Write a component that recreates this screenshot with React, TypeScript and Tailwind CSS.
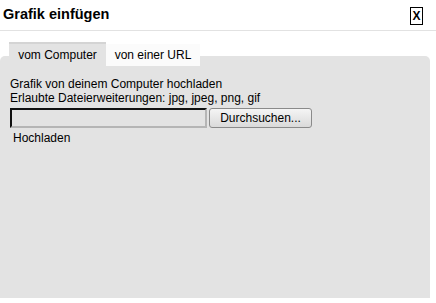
export default function App() {
  return (
    <div className="w-[436px] h-[303px] bg-white relative" style={{ fontFamily: '"Liberation Sans", Arial, sans-serif' }}>
      {/* Header */}
      <div className="h-[31px] flex items-start justify-between border-b border-[#e2e2e2]">
        <h1 className="pl-[3px] pt-[5px] text-[14.5px] font-bold text-black leading-[18px]">Grafik einfügen</h1>
        <button className="mt-[7px] mr-[13px] w-[13px] h-[18px] border border-black flex items-center justify-center text-[12px] font-bold leading-none text-black">
          X
        </button>
      </div>

      {/* Tabs */}
      <div className="flex pl-[9px] pt-[11px] h-[35px] relative z-10">
        <div className="w-[97px] h-[24px] bg-[#e3e3e3] border-t-2 border-[#d4d4d4] text-[12px] text-black flex items-center justify-center pb-[1px]">
          vom Computer
        </div>
        <div className="w-[94px] h-[24px] bg-[#fbfbfb] border-t-2 border-white text-[12px] text-black flex items-center justify-center pb-[1px]">
          von einer URL
        </div>
      </div>

      {/* Panel */}
      <div className="w-[430px] h-[242px] bg-[#e3e3e3] rounded-t-[5px] -mt-[10px] pt-[21px] px-[10px]">
        <p className="text-[12px] leading-[14px] text-black">Grafik von deinem Computer hochladen</p>
        <p className="text-[12px] leading-[14px] text-black">Erlaubte Dateierweiterungen: jpg, jpeg, png, gif</p>
        <div className="flex mt-[3px] gap-[2px]">
          <div className="w-[197px] h-[20px] bg-[#e3e3e3] border-2 border-t-[#111] border-l-[#111] border-b-[#b5b5b5] border-r-[#b5b5b5]" />
          <button className="w-[103px] h-[20px] rounded-[3px] border border-[#8a8a8a] bg-gradient-to-b from-[#f5f5f5] to-[#dadada] text-[12px] text-black leading-none">
            Durchsuchen...
          </button>
        </div>
        <div className="pl-[3px] mt-[2px] text-[12px] leading-[16px] text-black">Hochladen</div>
      </div>
    </div>
  );
}
